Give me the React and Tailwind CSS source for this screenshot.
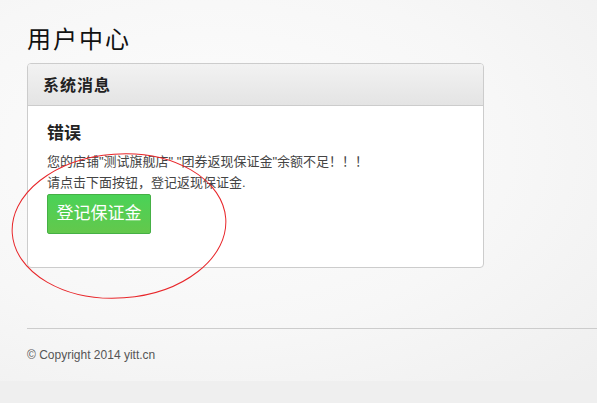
export default function App() {
  return (
    <div className="relative w-[597px] h-[403px] overflow-hidden bg-[#efefef] font-['Liberation_Sans','Noto_Sans_CJK_SC',sans-serif]">
      <div className="h-[381px] bg-[radial-gradient(ellipse_at_35%_40%,#fdfdfd_0%,#f7f7f7_55%,#efefef_100%)] pl-[27px] pt-[22px]">
        <h1 className="text-[24px] leading-[36px] font-normal tracking-[2px] text-[#111]">用户中心</h1>

        <div className="mt-[5px] w-[457px] h-[205px] rounded-[4px] border border-[#cccccc] bg-white overflow-hidden">
          <div className="h-[42px] border-b border-[#cccccc] bg-[linear-gradient(#f2f2f2,#e4e4e4)] pl-[15px] pt-[10px]">
            <span className="text-[16px] leading-[20px] font-bold tracking-[1px] text-[#222]">系统消息</span>
          </div>
          <div className="pl-[19px] pt-[16px]">
            <h2 className="text-[17px] leading-[24px] font-bold text-[#222]">错误</h2>
            <p className="mt-[5px] text-[13px] leading-[21px] text-[#444]">
              您的店铺"测试旗舰店" "团券返现保证金"余额不足！！！
            </p>
            <p className="text-[13px] leading-[21px] text-[#444]">请点击下面按钮，登记返现保证金.</p>
            <button
              type="button"
              className="mt-[1px] h-[40px] w-[104px] rounded-[2px] border border-[#45b045] bg-[linear-gradient(#4ad257,#63c84c)] text-[17px] text-white"
            >
              登记保证金
            </button>
          </div>
        </div>

        <div className="mt-[60px] border-t border-[#cccccc]" />
        <p className="mt-[18px] text-[12px] leading-[16px] text-[#555]">© Copyright 2014 yitt.cn</p>
      </div>

      <svg className="absolute left-0 top-0 pointer-events-none" width="597" height="403">
        <ellipse cx="119" cy="226" rx="107" ry="72" fill="none" stroke="#e8262a" strokeWidth="1" transform="rotate(-4 119 226)" />
      </svg>
    </div>
  );
}
